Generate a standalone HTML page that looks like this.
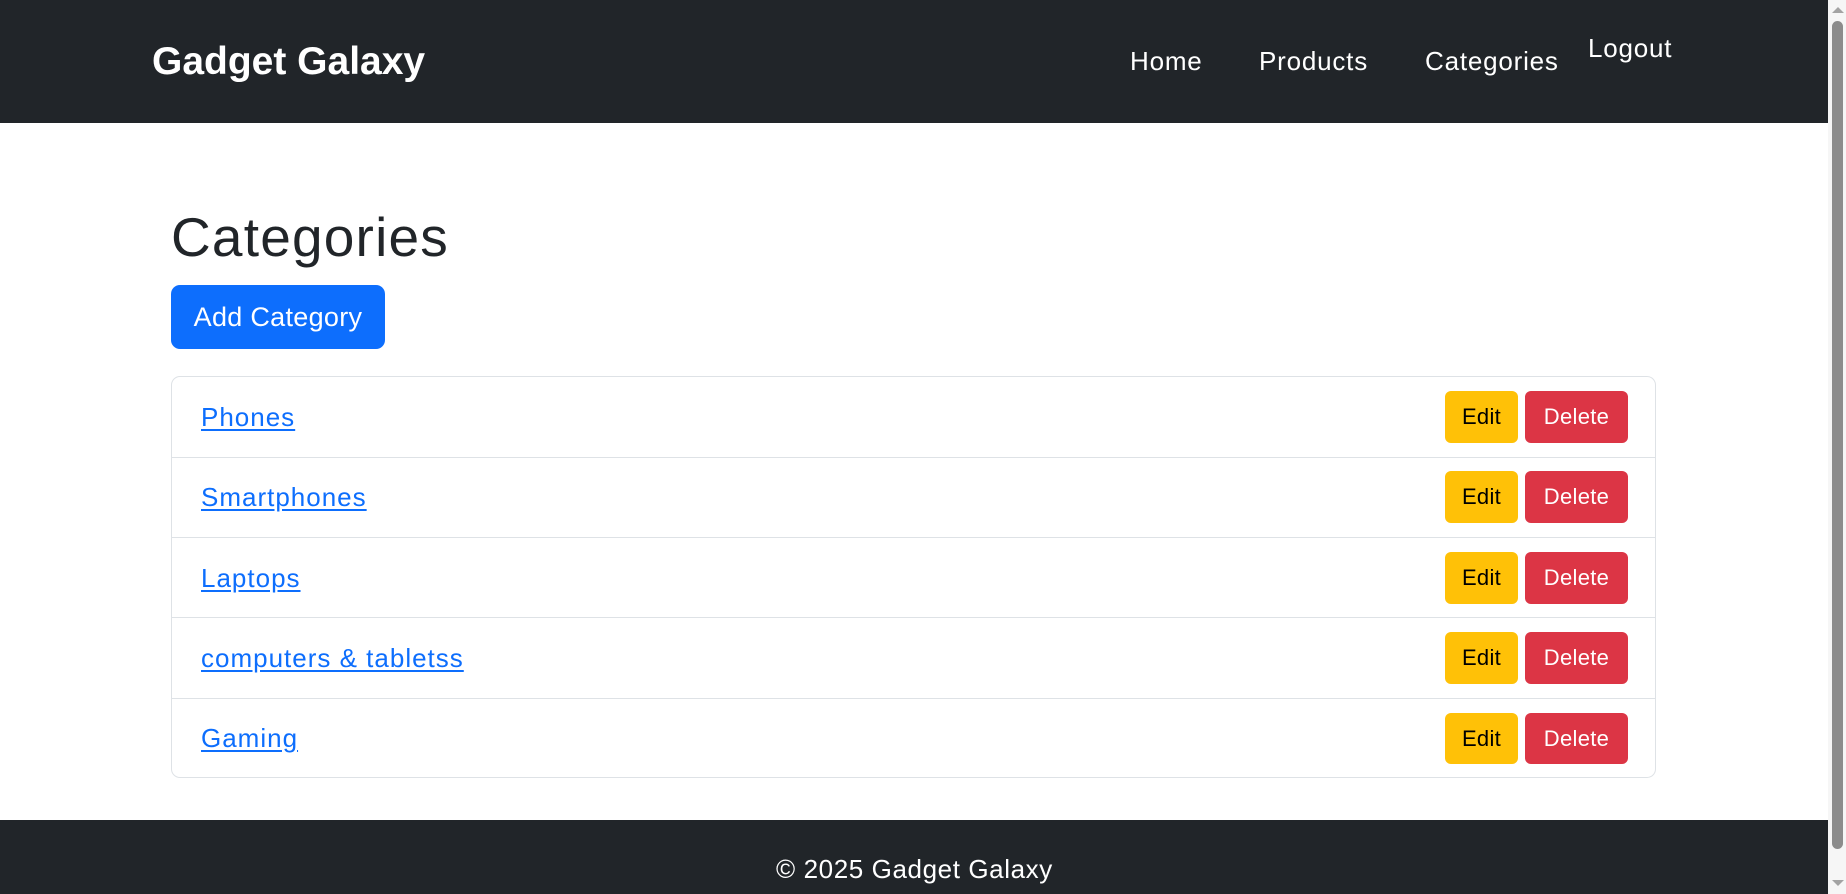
<!DOCTYPE html>
<html><head><meta charset="utf-8">
<style>
*{margin:0;padding:0;box-sizing:border-box}
html,body{width:1846px;height:894px;overflow:hidden;background:#fff;font-family:"Liberation Sans",sans-serif;color:#212529}
.abs{position:absolute;line-height:1;white-space:nowrap}
.nav{position:absolute;left:0;top:0;width:1828px;height:123px;background:#212529}
.foot{position:absolute;left:0;top:820px;width:1828px;height:74px;background:#212529}
.w{color:#fff}
.n{font-size:26px;letter-spacing:0.8px}
.btn{position:absolute;display:flex;align-items:center;justify-content:center;border-radius:6px;font-size:22px;line-height:1;letter-spacing:0.3px}
.card{position:absolute;left:171px;top:376px;width:1485px;height:402px;border:1px solid #dee2e6;border-radius:9px}
.row{position:absolute;left:0;width:100%;border-top:1px solid #dee2e6}
.lnk{position:absolute;left:29px;font-size:26px;line-height:1;color:#0d6efd;text-decoration:underline;text-underline-offset:3px;letter-spacing:1px;white-space:nowrap}
.sb{position:absolute;left:1828px;top:0;width:18px;height:894px;background:#f6f6f6}
</style></head><body>
<div class="nav"></div>
<div class="abs w" style="left:152px;top:42px;font-size:39px;font-weight:bold">Gadget Galaxy</div>
<div class="abs w n" style="left:1130px;top:48px">Home</div>
<div class="abs w n" style="left:1259px;top:48px">Products</div>
<div class="abs w n" style="left:1425px;top:48px">Categories</div>
<div class="abs w n" style="left:1588px;top:35px">Logout</div>

<div class="abs" style="left:171px;top:210px;font-size:55px;letter-spacing:1.2px">Categories</div>
<div class="btn" style="left:171px;top:285px;width:214px;height:64px;background:#0d6efd;color:#fff;font-size:27px;border-radius:9px">Add Category</div>

<div class="card">
  <div class="lnk" style="top:27px">Phones</div>
  <div class="row" style="top:80px"></div>
  <div class="lnk" style="top:107px">Smartphones</div>
  <div class="row" style="top:160px"></div>
  <div class="lnk" style="top:188px">Laptops</div>
  <div class="row" style="top:240px"></div>
  <div class="lnk" style="top:268px">computers &amp; tabletss</div>
  <div class="row" style="top:321px"></div>
  <div class="lnk" style="top:348px">Gaming</div>
</div>

<div class="btn" style="left:1445px;top:391px;width:73px;height:52px;background:#ffc107;color:#000">Edit</div>
<div class="btn" style="left:1525px;top:391px;width:103px;height:52px;background:#dc3545;color:#fff">Delete</div>
<div class="btn" style="left:1445px;top:471px;width:73px;height:52px;background:#ffc107;color:#000">Edit</div>
<div class="btn" style="left:1525px;top:471px;width:103px;height:52px;background:#dc3545;color:#fff">Delete</div>
<div class="btn" style="left:1445px;top:552px;width:73px;height:52px;background:#ffc107;color:#000">Edit</div>
<div class="btn" style="left:1525px;top:552px;width:103px;height:52px;background:#dc3545;color:#fff">Delete</div>
<div class="btn" style="left:1445px;top:632px;width:73px;height:52px;background:#ffc107;color:#000">Edit</div>
<div class="btn" style="left:1525px;top:632px;width:103px;height:52px;background:#dc3545;color:#fff">Delete</div>
<div class="btn" style="left:1445px;top:713px;width:73px;height:51px;background:#ffc107;color:#000">Edit</div>
<div class="btn" style="left:1525px;top:713px;width:103px;height:51px;background:#dc3545;color:#fff">Delete</div>

<div class="foot"></div>
<div class="abs w" style="left:776px;top:856px;font-size:26px;letter-spacing:0.6px">© 2025 Gadget Galaxy</div>

<div class="sb">
  <div style="position:absolute;left:4px;top:7px;width:0;height:0;border-left:6px solid transparent;border-right:6px solid transparent;border-bottom:6px solid #a3a3a3"></div>
  <div style="position:absolute;left:4px;top:21px;width:11px;height:828px;background:#8c8c8c;border-radius:6px"></div>
  <div style="position:absolute;left:4px;top:880px;width:0;height:0;border-left:6px solid transparent;border-right:6px solid transparent;border-top:6px solid #a3a3a3"></div>
</div>
</body></html>
